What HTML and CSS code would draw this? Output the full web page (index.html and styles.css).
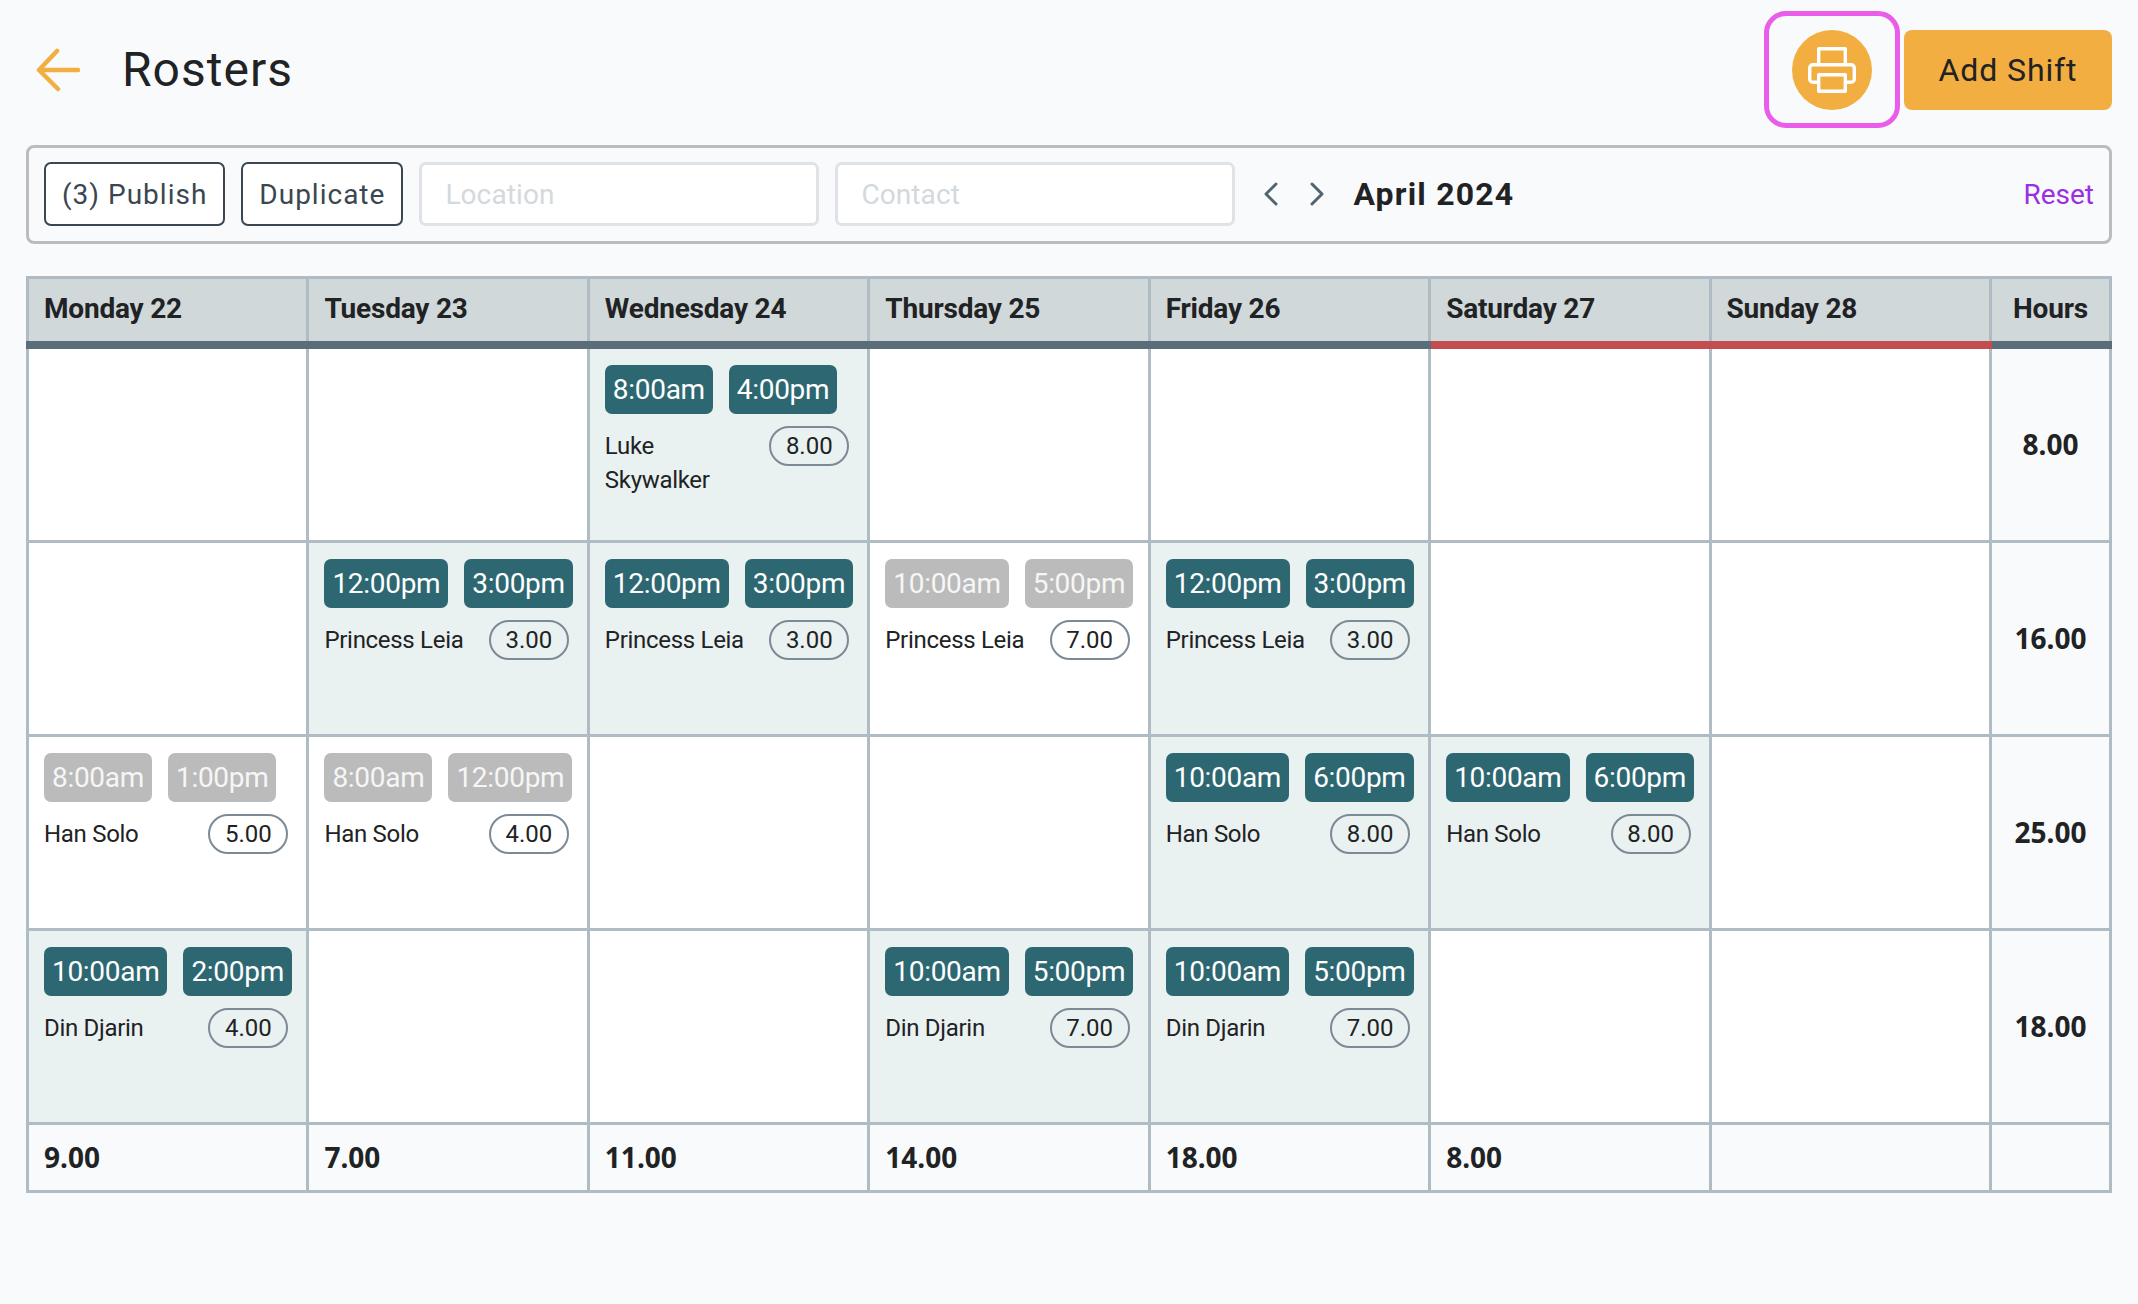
FILE: index.html
```html
<!DOCTYPE html>
<html lang="en">
<head>
<meta charset="utf-8">
<title>Rosters</title>
<link rel="stylesheet" href="styles.css">
</head>
<body>
<main class="page">
  <header class="top">
    <svg class="back" viewBox="0 0 44 44" width="44" height="44" fill="none" stroke="#f2ae40" stroke-width="4.5" stroke-linecap="round" stroke-linejoin="round"><path d="M42 22H3M21 3L3 22l19 19"/></svg>
    <h1 class="title">Rosters</h1>
    <div class="print-focus">
      <span class="print">
        <svg viewBox="0 0 48 48" width="48" height="48" fill="none" stroke="#fff" stroke-width="3.4" stroke-linejoin="round" stroke-linecap="round"><path d="M10.700 18.700V2.700h26.600v16"/><path d="M10.700 36.300H5a3.300 3.300 0 0 1-3.300-3.300V22a3.300 3.300 0 0 1 3.300-3.300h38a3.300 3.300 0 0 1 3.300 3.300v11a3.300 3.300 0 0 1-3.300 3.300h-5.700"/><path d="M10.700 28.700h26.600v16.600H10.700z"/></svg>
      </span>
    </div>
    <button class="add">Add Shift</button>
  </header>

  <section class="tools">
    <button class="ghost">(3) Publish</button>
    <button class="ghost">Duplicate</button>
    <div class="field">Location</div>
    <div class="field">Contact</div>
    <svg class="chev first" viewBox="0 0 16 24" width="16" height="24" fill="none" stroke="#52646f" stroke-width="3" stroke-linecap="round" stroke-linejoin="round"><path d="M13 2L3 12l10 10"/></svg>
    <svg class="chev" viewBox="0 0 16 24" width="16" height="24" fill="none" stroke="#52646f" stroke-width="3" stroke-linecap="round" stroke-linejoin="round"><path d="M3 2l10 10-10 10"/></svg>
    <strong class="month">April 2024</strong>
    <a class="reset">Reset</a>
  </section>

  <section class="roster">
    <div class="head">Monday 22</div><div class="head">Tuesday 23</div><div class="head">Wednesday 24</div><div class="head">Thursday 25</div><div class="head">Friday 26</div><div class="head">Saturday 27</div><div class="head">Sunday 28</div><div class="head hours-head">Hours</div>
    <div class="bar"></div><div class="bar"></div><div class="bar"></div><div class="bar"></div><div class="bar"></div><div class="bar red"></div><div class="bar red"></div><div class="bar"></div>

    <div class="cell"></div>
    <div class="cell"></div>
    <div class="cell on"><div class="times"><span class="chip">8:00am</span><span class="chip">4:00pm</span></div><div class="who"><span class="name">Luke Skywalker</span><span class="pill">8.00</span></div></div>
    <div class="cell"></div>
    <div class="cell"></div>
    <div class="cell"></div>
    <div class="cell"></div>
    <div class="cell total">8.00</div>

    <div class="cell"></div>
    <div class="cell on"><div class="times"><span class="chip">12:00pm</span><span class="chip">3:00pm</span></div><div class="who"><span class="name">Princess Leia</span><span class="pill">3.00</span></div></div>
    <div class="cell on"><div class="times"><span class="chip">12:00pm</span><span class="chip">3:00pm</span></div><div class="who"><span class="name">Princess Leia</span><span class="pill">3.00</span></div></div>
    <div class="cell"><div class="times"><span class="chip off">10:00am</span><span class="chip off">5:00pm</span></div><div class="who"><span class="name">Princess Leia</span><span class="pill">7.00</span></div></div>
    <div class="cell on"><div class="times"><span class="chip">12:00pm</span><span class="chip">3:00pm</span></div><div class="who"><span class="name">Princess Leia</span><span class="pill">3.00</span></div></div>
    <div class="cell"></div>
    <div class="cell"></div>
    <div class="cell total">16.00</div>

    <div class="cell"><div class="times"><span class="chip off">8:00am</span><span class="chip off">1:00pm</span></div><div class="who"><span class="name">Han Solo</span><span class="pill">5.00</span></div></div>
    <div class="cell"><div class="times"><span class="chip off">8:00am</span><span class="chip off">12:00pm</span></div><div class="who"><span class="name">Han Solo</span><span class="pill">4.00</span></div></div>
    <div class="cell"></div>
    <div class="cell"></div>
    <div class="cell on"><div class="times"><span class="chip">10:00am</span><span class="chip">6:00pm</span></div><div class="who"><span class="name">Han Solo</span><span class="pill">8.00</span></div></div>
    <div class="cell on"><div class="times"><span class="chip">10:00am</span><span class="chip">6:00pm</span></div><div class="who"><span class="name">Han Solo</span><span class="pill">8.00</span></div></div>
    <div class="cell"></div>
    <div class="cell total">25.00</div>

    <div class="cell on"><div class="times"><span class="chip">10:00am</span><span class="chip">2:00pm</span></div><div class="who"><span class="name">Din Djarin</span><span class="pill">4.00</span></div></div>
    <div class="cell"></div>
    <div class="cell"></div>
    <div class="cell on"><div class="times"><span class="chip">10:00am</span><span class="chip">5:00pm</span></div><div class="who"><span class="name">Din Djarin</span><span class="pill">7.00</span></div></div>
    <div class="cell on"><div class="times"><span class="chip">10:00am</span><span class="chip">5:00pm</span></div><div class="who"><span class="name">Din Djarin</span><span class="pill">7.00</span></div></div>
    <div class="cell"></div>
    <div class="cell"></div>
    <div class="cell total">18.00</div>

    <div class="foot">9.00</div><div class="foot">7.00</div><div class="foot">11.00</div><div class="foot">14.00</div><div class="foot">18.00</div><div class="foot">8.00</div><div class="foot"></div><div class="foot"></div>
  </section>
</main>
</body>
</html>
```

FILE: styles.css
```css
* { box-sizing: border-box; }
html, body { margin: 0; background: #f9fafc; }
body { font-family: Roboto, "Liberation Sans", sans-serif; color: #212224; }
.page { padding: 11px 26px 0; }

.top { display: flex; align-items: center; height: 117px; }
.back { margin: 0 0 0 10px; }
.title { margin: 0 0 0 42px; font-size: 48px; font-weight: 400; letter-spacing: 1px; flex: 1; }
.print-focus { width: 136px; height: 117px; border: 5px solid #ea5cea; border-radius: 22px; display: flex; align-items: center; justify-content: center; }
.print { width: 80px; height: 80px; border-radius: 50%; background: #f2ae40; display: flex; align-items: center; justify-content: center; }
.add { margin-left: 4px; width: 208px; height: 80px; border: 0; border-radius: 8px; background: #f2ae40; color: #212224; font: 400 32px Roboto, sans-serif; letter-spacing: .9px; }

.tools { margin-top: 17px; height: 99px; border: 3px solid #b9bdc2; border-radius: 8px; display: flex; align-items: center; padding: 0 15px 2px; }
.ghost { height: 64px; padding: 2px 16px 0; margin-right: 16px; border: 2.500px solid #3a4650; border-radius: 7px; background: #fff; color: #3a4650; font: 400 28px Roboto, sans-serif; letter-spacing: 1px; }
.field { width: 400px; height: 64px; margin-right: 16px; padding: 2px 0 0 23px; border: 3px solid #dfe3e6; border-radius: 7px; background: #fff; color: #d3d9dc; font-size: 28px; letter-spacing: .1px; display: flex; align-items: center; }
.chev { margin-left: 30px; }
.chev.first { margin-left: 12px; }
.month { margin-left: 28px; font-size: 32px; font-weight: 700; letter-spacing: 1.200px; flex: 1; }
.reset { color: #9b30e0; font-size: 28px; padding-top: 2px; }

.roster { margin-top: 32px; display: grid; grid-template-columns: repeat(7, 1fr) 120px; grid-template-rows: 65px 8px repeat(4, 194px) 68px; border-left: 3px solid #b0bcc4; }
.head { background: #d0d8da; border-top: 3px solid #b0bcc4; border-right: 3px solid #b0bcc4; padding: 0 0 4px 15px; font-size: 28px; font-weight: 700; display: flex; align-items: center; letter-spacing: -.2px; }
.hours-head { padding-left: 21px; }
.bar { background: #5a6d78; }
.head + .bar { margin-left: -3px; }
.bar.red { background: #c44d4f; }
.cell { background: #fff; border-right: 3px solid #b0bcc4; border-bottom: 3px solid #b0bcc4; padding: 16px 0 0 15px; min-width: 0; }
.cell.on { background: #e9f1f1; }
.cell.total { background: #f9fafc; padding: 0 0 2px; display: flex; align-items: center; justify-content: center; font-size: 28px; font-weight: 700; font-family: "Noto Sans", sans-serif; }
.foot { border-right: 3px solid #b0bcc4; border-bottom: 3px solid #b0bcc4; padding: 0 0 2px 15px; font-size: 28px; font-weight: 700; font-family: "Noto Sans", sans-serif; display: flex; align-items: center; }

.times { display: flex; gap: 16px; }
.chip { height: 49px; padding: 0 8px; border-radius: 7px; background: #2d6872; color: #fff; font-size: 28px; letter-spacing: -.3px; display: flex; align-items: center; white-space: nowrap; }
.chip.off { background: #bbbbbb; color: #f6f6f6; }
.who { display: flex; align-items: flex-start; justify-content: space-between; margin-top: 12px; padding-right: 18px; }
.name { font-size: 24px; line-height: 34px; padding-top: 3px; max-width: 145px; letter-spacing: -.3px; }
.pill { flex: none; width: 80px; height: 40px; border: 2px solid #7c8a96; border-radius: 20px; font-size: 24px; display: flex; align-items: center; justify-content: center; }
```
